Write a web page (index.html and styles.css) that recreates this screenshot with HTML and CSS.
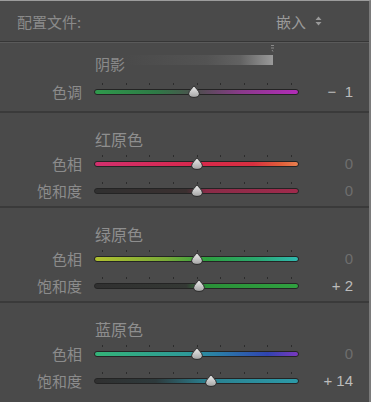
FILE: index.html
```html
<!DOCTYPE html>
<html lang="zh-CN">
<head>
    <meta charset="UTF-8">
    <title>相机校准</title>
    <link rel="stylesheet" href="styles.css">
</head>
<body>
    <svg width="0" height="0" class="defs">
        <defs>
            <linearGradient id="knob" x1="0" y1="0" x2="0" y2="1">
                <stop offset="0" stop-color="#f0f0f0"/>
                <stop offset="1" stop-color="#a4a4a4"/>
            </linearGradient>
            <symbol id="thumb" viewBox="0 0 12 13">
                <path d="M6 0.6 C7.4 3.2 11.4 6 11.4 8.8 C11.4 11.2 9 12.4 6 12.4 C3 12.4 0.6 11.2 0.6 8.8 C0.6 6 4.6 3.2 6 0.6 Z" fill="url(#knob)" stroke="#262626" stroke-width="1"/>
            </symbol>
        </defs>
    </svg>
    <div class="panel">
        <div class="header">
            <span class="header-label">配置文件:</span>
            <span class="profile-select">嵌入
                <svg class="updown" width="7" height="10" viewBox="0 0 7 10"><path d="M3.5 0.5 L6.5 4 L0.5 4 Z M3.5 9.5 L6.5 6 L0.5 6 Z" fill="#9a9a9a"/></svg>
            </span>
        </div>

        <div class="shadow-block">
            <div class="mini-mark">
                <svg width="5" height="8" viewBox="0 0 5 8"><path d="M1 1.5 H4 M1 4 H4 M2 6 L3 7.5" stroke="#8a8a8a" stroke-width="1"/></svg>
            </div>
            <div class="shadow-row">
                <span class="shadow-label">阴影</span>
                <div class="shadow-bar"></div>
            </div>
            <div class="slider-row">
                <span class="row-label">色调</span>
                <div class="slider">
                    <div class="ticks"><i></i><i></i><i></i><i></i><i></i><i></i><i></i><i></i><i></i></div>
                    <div class="track tone"><svg class="thumb" style="left: 49%"><use href="#thumb"/></svg></div>
                </div>
                <span class="row-value bright">−&nbsp; 1</span>
            </div>
        </div>

        <div class="section">
            <div class="section-title">红原色</div>
            <div class="slider-row">
                <span class="row-label">色相</span>
                <div class="slider">
                    <div class="ticks"><i></i><i></i><i></i><i></i><i></i><i></i><i></i><i></i><i></i></div>
                    <div class="track red-hue"><svg class="thumb" style="left: 50%"><use href="#thumb"/></svg></div>
                </div>
                <span class="row-value">0</span>
            </div>
            <div class="slider-row">
                <span class="row-label">饱和度</span>
                <div class="slider">
                    <div class="ticks"><i></i><i></i><i></i><i></i><i></i><i></i><i></i><i></i><i></i></div>
                    <div class="track red-sat"><svg class="thumb" style="left: 50%"><use href="#thumb"/></svg></div>
                </div>
                <span class="row-value">0</span>
            </div>
        </div>

        <div class="section">
            <div class="section-title">绿原色</div>
            <div class="slider-row">
                <span class="row-label">色相</span>
                <div class="slider">
                    <div class="ticks"><i></i><i></i><i></i><i></i><i></i><i></i><i></i><i></i><i></i></div>
                    <div class="track green-hue"><svg class="thumb" style="left: 50%"><use href="#thumb"/></svg></div>
                </div>
                <span class="row-value">0</span>
            </div>
            <div class="slider-row">
                <span class="row-label">饱和度</span>
                <div class="slider">
                    <div class="ticks"><i></i><i></i><i></i><i></i><i></i><i></i><i></i><i></i><i></i></div>
                    <div class="track green-sat"><svg class="thumb" style="left: 51%"><use href="#thumb"/></svg></div>
                </div>
                <span class="row-value bright">+ 2</span>
            </div>
        </div>

        <div class="section">
            <div class="section-title">蓝原色</div>
            <div class="slider-row">
                <span class="row-label">色相</span>
                <div class="slider">
                    <div class="ticks"><i></i><i></i><i></i><i></i><i></i><i></i><i></i><i></i><i></i></div>
                    <div class="track blue-hue"><svg class="thumb" style="left: 50%"><use href="#thumb"/></svg></div>
                </div>
                <span class="row-value">0</span>
            </div>
            <div class="slider-row">
                <span class="row-label">饱和度</span>
                <div class="slider">
                    <div class="ticks"><i></i><i></i><i></i><i></i><i></i><i></i><i></i><i></i><i></i></div>
                    <div class="track blue-sat"><svg class="thumb" style="left: 57%"><use href="#thumb"/></svg></div>
                </div>
                <span class="row-value bright">+ 14</span>
            </div>
        </div>
    </div>
</body>
</html>
```

FILE: styles.css
```css
body {
    margin: 0;
    background-color: #4a4a4a;
    font-family: "Noto Sans CJK SC", "Liberation Sans", sans-serif;
}
.defs {
    position: absolute;
}
.panel {
    box-sizing: border-box;
    width: 371px;
    height: 402px;
    border-top: 1px solid #9c9c9c;
    border-right: 2px solid #7a7a7a;
    background-color: #4a4a4a;
    overflow: hidden;
}
.header {
    height: 40px;
    display: flex;
    align-items: center;
    justify-content: space-between;
    padding: 0 47px 0 17px;
    border-bottom: 1px solid #363636;
    box-shadow: 0 1px 0 #5a5a5a;
}
.header-label {
    font-size: 15px;
    color: #8a8a8a;
}
.profile-select {
    font-size: 15px;
    color: #9a9a9a;
    display: flex;
    align-items: center;
    gap: 9px;
}
.shadow-block {
    height: 67px;
    margin-top: 1px;
    padding-bottom: 1px;
}
.mini-mark {
    display: flex;
    height: 9px;
    padding-left: 270px;
    padding-top: 1px;
}
.shadow-row {
    display: flex;
    align-items: flex-start;
    height: 25px;
    padding-left: 95px;
}
.shadow-label {
    font-size: 15px;
    line-height: 20px;
    margin-top: 1px;
    color: #8a8a8a;
}
.shadow-bar {
    width: 148px;
    height: 10px;
    margin-top: 2px;
    background: linear-gradient(to right, rgba(74, 74, 74, 0) 0%, #535353 55%, #626262 78%, #9a9a9a 100%);
}
.slider-row {
    display: flex;
    align-items: center;
    height: 27px;
}
.row-label {
    width: 82px;
    text-align: right;
    font-size: 15px;
    color: #8c8c8c;
    margin-right: 12px;
}
.slider {
    width: 205px;
    display: flex;
    flex-direction: column;
    padding-bottom: 6px;
}
.ticks {
    height: 2px;
    display: flex;
    justify-content: space-between;
    padding: 0 7px 0 8px;
    margin-bottom: 4px;
}
.ticks i {
    width: 1px;
    height: 2px;
    background-color: #2c2c2c;
}
.track {
    position: relative;
    box-sizing: border-box;
    height: 6px;
    border: 1px solid #242424;
    border-radius: 3px;
}
.thumb {
    position: absolute;
    top: -5px;
    width: 12px;
    height: 13px;
    margin-left: -6px;
}
.tone {
    background: linear-gradient(to right, #2f9a4c, #2e7a46 30%, #4e4e4e 50%, #8a3a8a 72%, #b22cb8);
}
.red-hue {
    background: linear-gradient(to right, #d2306e, #d8284c 50%, #d83040 78%, #e0603a 92%, #e88050);
}
.red-sat {
    background: linear-gradient(to right, #303030, #3a3030 45%, #8a2c48 55%, #a02a4c);
}
.green-hue {
    background: linear-gradient(to right, #b0c030, #7aaa38 35%, #2ea040 55%, #2aa870 80%, #30b8b0);
}
.green-sat {
    background: linear-gradient(to right, #303030, #343834 45%, #2a9038 55%, #30a040);
}
.blue-hue {
    background: linear-gradient(to right, #34b478, #2e9a98 45%, #2a7aa8 62%, #3044b0 85%, #7a38c0);
}
.blue-sat {
    background: linear-gradient(to right, #303030, #2e3a3c 30%, #2a8090 55%, #2c9aa8);
}
.row-value {
    width: 54px;
    text-align: right;
    font-family: "Liberation Sans", sans-serif;
    font-size: 15px;
    color: #6e6e6e;
}
.row-value.bright {
    color: #bcbcbc;
}
.section {
    height: 95px;
    box-sizing: border-box;
    padding-top: 16px;
    border-top: 2px solid #3a3a3a;
}
.section-title {
    height: 21px;
    line-height: 21px;
    padding-left: 95px;
    font-size: 16px;
    color: #8e8e8e;
}
```
